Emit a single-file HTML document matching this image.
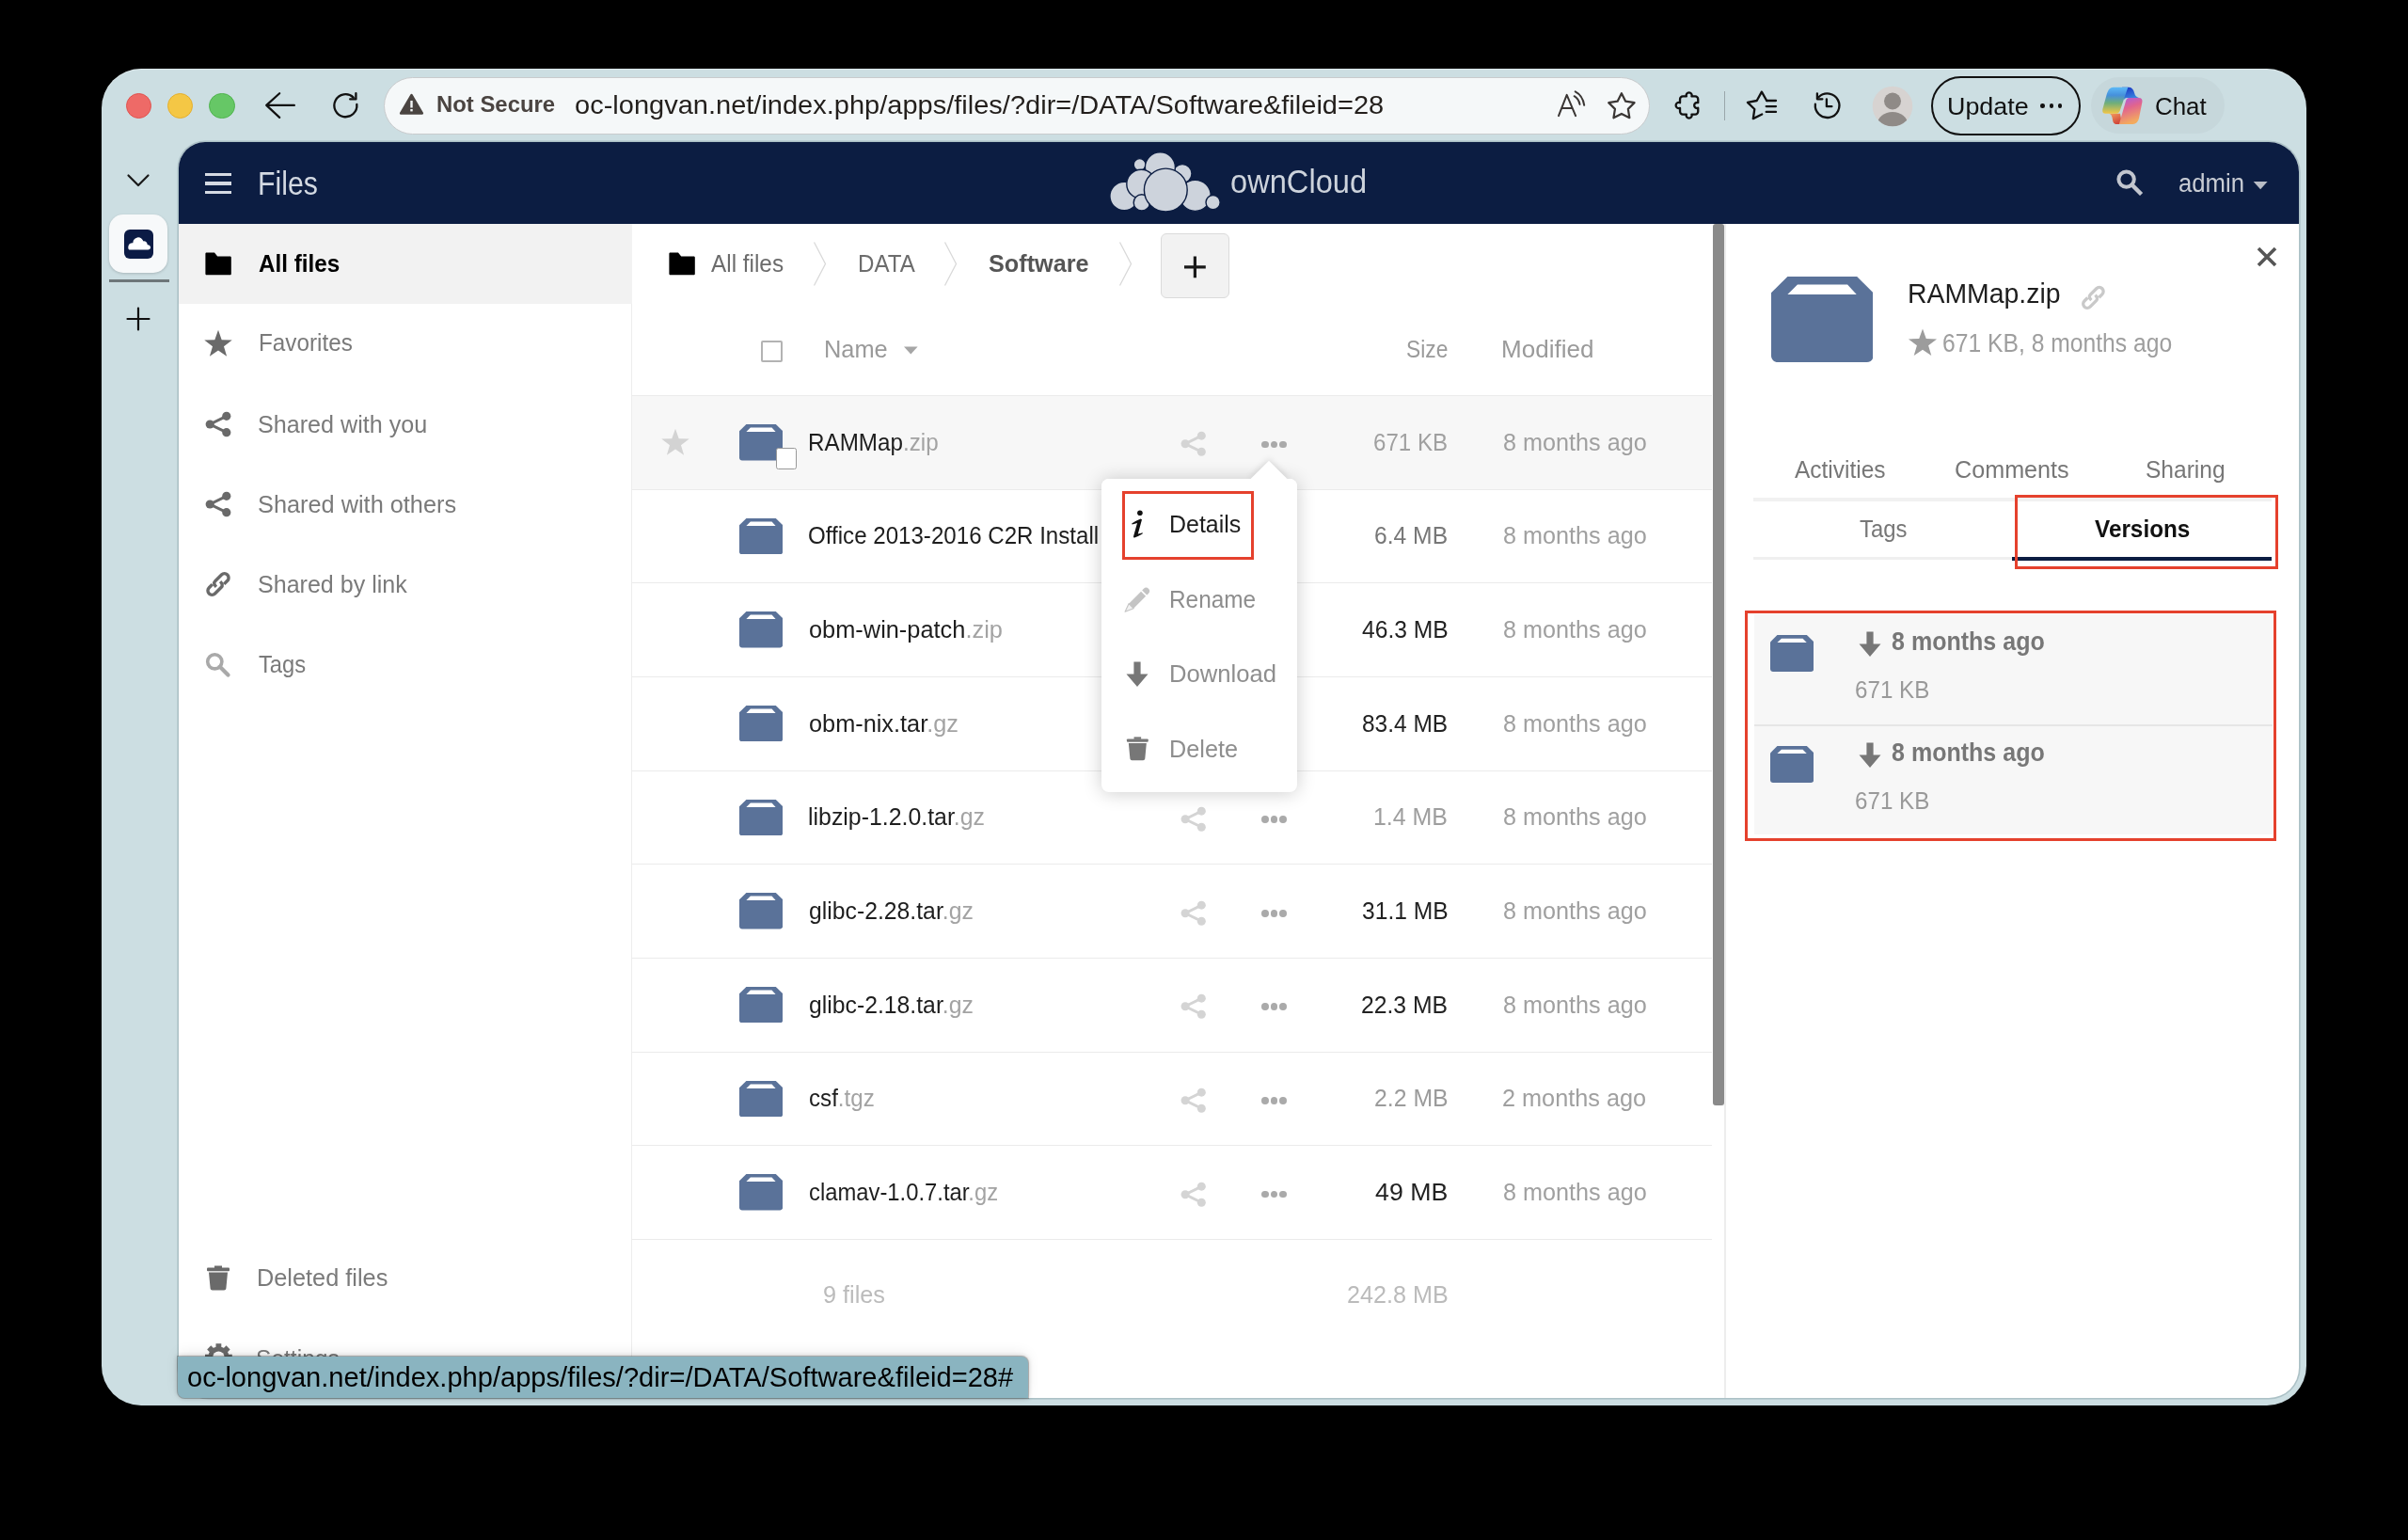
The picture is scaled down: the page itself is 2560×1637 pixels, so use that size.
<!DOCTYPE html>
<html><head><meta charset="utf-8"><style>
html,body{margin:0;padding:0;}
body{width:2560px;height:1637px;background:#000;position:relative;overflow:hidden;font-family:'Liberation Sans',sans-serif;}
body div, body svg{position:absolute;box-sizing:border-box;}
.t{white-space:pre;line-height:1;transform-origin:0 0;}
</style></head><body>
<div style="left:108.00px;top:73.00px;width:2344.00px;height:1420.50px;background:#CCDEE2;border-radius:42px;box-shadow:inset 0 1px 0 rgba(255,255,255,0.35);"></div>
<div style="left:133.50px;top:98.50px;width:27.40px;height:27.40px;background:#EE6A67;border:1.2px solid #E0524E;border-radius:50%;"></div>
<div style="left:177.70px;top:98.50px;width:27.40px;height:27.40px;background:#F4C745;border:1.2px solid #E5AE2B;border-radius:50%;"></div>
<div style="left:222.20px;top:98.50px;width:27.40px;height:27.40px;background:#66C766;border:1.2px solid #4FB34D;border-radius:50%;"></div>
<svg style="left:278.00px;top:94.00px;" width="40" height="36" viewBox="0 0 40 36"><path d="M5.2 17.9H34.9M5.2 17.9L19.2 5.2M5.2 17.9L19.2 30.9" stroke="#111" stroke-width="2.2" fill="none" stroke-linecap="round" stroke-linejoin="round"/></svg>
<svg style="left:350.00px;top:95.00px;" width="36" height="36" viewBox="0 0 36 36"><path d="M25.7 8.6A12 12 0 1 0 29.3 15.9" stroke="#111" stroke-width="2.3" fill="none" stroke-linecap="round"/><path d="M28.4 4.2V10.4H22.2" stroke="#111" stroke-width="2.3" fill="none" stroke-linecap="round" stroke-linejoin="round"/></svg>
<div style="left:408.00px;top:82.00px;width:1345.50px;height:60.80px;background:#F5F8F9;border:1.8px solid #C9CBCD;border-radius:31px;"></div>
<svg style="left:424.00px;top:99.00px;" width="27" height="24" viewBox="0 0 27 24"><path d="M13.5 2.2L24.8 21.5H2.2Z" fill="#4A4441" stroke="#4A4441" stroke-width="2.6" stroke-linejoin="round"/><rect x="12.3" y="8" width="2.4" height="7.5" fill="#F4F7F8"/><rect x="12.3" y="17" width="2.4" height="2.4" fill="#F4F7F8"/></svg>
<div class="t" style="left:464.31px;top:99.37px;font-size:24.13px;font-weight:700;font-family:'Liberation Sans';transform:scaleX(0.9899);"><span style="color:#4A4441">Not Secure</span></div>
<div class="t" style="left:611.39px;top:99.01px;font-size:27.03px;font-weight:400;font-family:'Liberation Sans';transform:scaleX(1.0740);"><span style="color:#231F1C">oc-longvan.net/index.php/apps/files/?dir=/DATA/Software&amp;fileid=28</span></div>
<svg style="left:1650.00px;top:94.00px;" width="40" height="36" viewBox="0 0 40 36"><path d="M7 29.1L15.7 6.9L25.1 29.1M10.3 20.9H21.6" stroke="#3A3634" stroke-width="2" fill="none" stroke-linecap="round" stroke-linejoin="round"/><path d="M23.6 8.2Q28.3 11 29.5 16.9" stroke="#3A3634" stroke-width="2" fill="none" stroke-linecap="round"/><path d="M24.7 3.4Q32.6 7.5 34.2 17.8" stroke="#3A3634" stroke-width="2" fill="none" stroke-linecap="round"/></svg>
<svg style="left:1704.00px;top:93.00px;" width="40" height="38" viewBox="0 0 40 38"><path d="M19.90 6.20L24.19 14.69L33.60 16.15L26.84 22.86L28.36 32.25L19.90 27.90L11.44 32.25L12.96 22.86L6.20 16.15L15.61 14.69Z" stroke="#3A3634" stroke-width="2.2" fill="none" stroke-linejoin="round"/></svg>
<svg style="left:1776.00px;top:93.00px;" width="38" height="38" viewBox="0 0 38 38"><path d="M13.05 9.4H16.85A3 3 0 1 1 22.45 9.4H26.25A3 3 0 0 1 29.25 12.4V16.2A3 3 0 1 0 29.25 21.8V25.55A3 3 0 0 1 26.25 28.55H22.45A3 3 0 1 1 16.85 28.55H13.05A3 3 0 0 1 10.05 25.55V21.8A3.1 3.1 0 1 1 10.05 16.2V12.4A3 3 0 0 1 13.05 9.4Z" stroke="#111" stroke-width="2.3" fill="none" stroke-linejoin="round"/></svg>
<div style="left:1832.60px;top:97.00px;width:1.40px;height:30.70px;background:#9AA6AA;"></div>
<svg style="left:1854.00px;top:93.00px;" width="40" height="38" viewBox="0 0 40 38"><path d="M24.2 14L18.9 4.6L13.7 14L3.9 15.9L11.3 23L9.8 33.1L19.2 28.5" stroke="#111" stroke-width="2.3" fill="none" stroke-linejoin="round" stroke-linecap="round"/><path d="M24.2 14H34M23.7 20.1H34M23.7 25.9H34" stroke="#111" stroke-width="2.3" stroke-linecap="round"/></svg>
<svg style="left:1924.00px;top:94.00px;" width="38" height="36" viewBox="0 0 38 36"><path d="M5.9 16.64A12.8 12.8 0 1 0 9.71 8.99" stroke="#111" stroke-width="2.3" fill="none" stroke-linecap="round"/><path d="M7.9 5.3V11.3H13.4" stroke="#111" stroke-width="2.3" fill="none" stroke-linecap="round" stroke-linejoin="round"/><path d="M17.9 11.3V19.2H23.4" stroke="#111" stroke-width="2.3" fill="none" stroke-linecap="round" stroke-linejoin="round"/></svg>
<svg style="left:1990.00px;top:91.00px;" width="44" height="44" viewBox="0 0 44 44"><defs><clipPath id="av"><circle cx="22" cy="22" r="21.3"/></clipPath></defs><circle cx="22" cy="22" r="21.3" fill="#D7D3D1"/><g clip-path="url(#av)"><circle cx="22" cy="16.5" r="9" fill="#8F8A87"/><ellipse cx="22" cy="41" rx="16" ry="13" fill="#8F8A87"/></g></svg>
<div style="left:2052.50px;top:80.60px;width:159.50px;height:63.20px;border:2.5px solid #111;border-radius:32px;"></div>
<div class="t" style="left:2070.12px;top:99.77px;font-size:26.02px;font-weight:500;font-family:'Liberation Sans';transform:scaleX(1.0331);"><span style="color:#111">Update</span></div>
<div style="left:2169.20px;top:110.40px;width:4.60px;height:4.60px;background:#111;border-radius:50%;"></div>
<div style="left:2178.50px;top:110.40px;width:4.60px;height:4.60px;background:#111;border-radius:50%;"></div>
<div style="left:2187.80px;top:110.40px;width:4.60px;height:4.60px;background:#111;border-radius:50%;"></div>
<div style="left:2222.50px;top:82.00px;width:142.90px;height:59.80px;background:#C6D7DB;border-radius:30px;"></div>
<svg style="left:2232.00px;top:90.00px;" width="48" height="44" viewBox="0 0 48 44"><defs>
<linearGradient id="cg1" x1="0" y1="0" x2="0" y2="1"><stop offset="0" stop-color="#5CB9F6"/><stop offset="0.3" stop-color="#4690DC"/><stop offset="0.6" stop-color="#6FAE7A"/><stop offset="1" stop-color="#F2C646"/></linearGradient>
<linearGradient id="cg2" x1="0" y1="0" x2="0.3" y2="1"><stop offset="0" stop-color="#A65BE6"/><stop offset="0.45" stop-color="#E1648E"/><stop offset="1" stop-color="#F3AA5E"/></linearGradient>
<linearGradient id="cg3" x1="0" y1="0" x2="0.4" y2="1"><stop offset="0" stop-color="#1730C0"/><stop offset="1" stop-color="#3A86E0"/></linearGradient>
<linearGradient id="cg4" x1="0" y1="0" x2="0.6" y2="1"><stop offset="0" stop-color="#F4A060"/><stop offset="1" stop-color="#D0453A"/></linearGradient>
</defs>
<path d="M24 2.8H31Q35.6 2.8 37 8.6Q38.2 13.6 42 13.9H29Q27 13.9 26.4 16Z" fill="url(#cg3)"/>
<path d="M11.5 30.7H22L24 41.9H17.2Q14.8 41.9 14 37.5Q13.2 31 10 30.7Z" fill="url(#cg4)"/>
<path d="M14.5 2.8H30.3L21.8 27.6Q20.8 30.7 17.8 30.7H6.6Q2.6 30.7 3.3 26.2L8 9.3Q10 2.8 14.5 2.8Z" fill="url(#cg1)"/>
<path d="M31.5 13.9H41.8Q46.2 13.9 45.4 18.6L42 35.8Q40.6 41.9 35.4 41.9H20.9L28.2 16.8Q29 13.9 31.5 13.9Z" fill="url(#cg2)"/></svg>
<div class="t" style="left:2291.09px;top:99.77px;font-size:26.02px;font-weight:500;font-family:'Liberation Sans';transform:scaleX(0.9958);"><span style="color:#111">Chat</span></div>
<svg style="left:130.00px;top:180.00px;" width="34" height="24" viewBox="0 0 34 24"><path d="M6.5 6.5L17 17L27.5 6.5" stroke="#1A1A1A" stroke-width="2.2" fill="none" stroke-linecap="round" stroke-linejoin="round"/></svg>
<div style="left:116.00px;top:227.70px;width:62.00px;height:62.30px;background:#F7F9FA;border-radius:15px;box-shadow:0 1px 3px rgba(0,0,0,0.18);"></div>
<div style="left:131.50px;top:243.50px;width:31.00px;height:31.00px;background:#0B1B45;border-radius:6px;"></div>
<svg style="left:131.50px;top:243.50px;" width="31" height="31" viewBox="0 0 31 31"><path d="M5.5 21.5H25.2C27.2 21.5 28.2 20 28 18.6C27.7 17 26.4 16 24.8 16.2C24.5 13.6 22.5 12 20.3 12.4C19.3 9.6 16.8 8 14.2 8.4C11.3 8.8 9.3 11.3 9.4 14.3C7.2 14 5 15.2 4.5 17.5C4 19.6 4.5 21.5 5.5 21.5Z" fill="#fff"/></svg>
<div style="left:116.00px;top:297.40px;width:64.00px;height:2.40px;background:#6E7679;"></div>
<svg style="left:130.00px;top:322.00px;" width="34" height="34" viewBox="0 0 34 34"><path d="M17 5.5V28.5M5.5 17H28.5" stroke="#111" stroke-width="2.2" stroke-linecap="round"/></svg>
<div style="left:189.50px;top:151.00px;width:2254.50px;height:1335.30px;background:#fff;border-radius:28px 32px 32px 32px;overflow:hidden;box-shadow:0 0 0 1.6px rgba(60,90,100,0.22);"></div>
<div style="left:189.50px;top:151.00px;width:2254.50px;height:86.80px;background:#0C1D42;border-radius:28px 32px 0 0;"></div>
<div style="left:218.40px;top:184.20px;width:27.90px;height:3.20px;background:#D5DAE3;"></div>
<div style="left:218.40px;top:193.40px;width:27.90px;height:3.20px;background:#D5DAE3;"></div>
<div style="left:218.40px;top:202.60px;width:27.90px;height:3.20px;background:#D5DAE3;"></div>
<div class="t" style="left:274.04px;top:178.13px;font-size:34.45px;font-weight:400;font-family:'Liberation Sans';transform:scaleX(0.8787);"><span style="color:#D3D9E2">Files</span></div>
<svg style="left:1180.00px;top:161.00px;" width="120" height="66" viewBox="0 0 120 66"><circle cx="15.2" cy="47.5" r="15.3" fill="#CDD3DC" stroke="#0C1D42" stroke-width="1.4"/><circle cx="31.6" cy="14" r="6.4" fill="#CDD3DC" stroke="#0C1D42" stroke-width="1.4"/><circle cx="77" cy="23.6" r="10" fill="#CDD3DC" stroke="#0C1D42" stroke-width="1.4"/><circle cx="53.4" cy="16.8" r="16" fill="#CDD3DC" stroke="#0C1D42" stroke-width="1.4"/><circle cx="33.2" cy="34.7" r="15.4" fill="#CDD3DC" stroke="#0C1D42" stroke-width="1.4"/><circle cx="90.6" cy="46.8" r="16.6" fill="#CDD3DC" stroke="#0C1D42" stroke-width="1.4"/><circle cx="109.6" cy="54.1" r="7.6" fill="#CDD3DC" stroke="#0C1D42" stroke-width="1.4"/><circle cx="33.8" cy="54.4" r="8.6" fill="#CDD3DC" stroke="#0C1D42" stroke-width="1.4"/><circle cx="59.3" cy="41" r="22.9" fill="#CDD3DC" stroke="#0C1D42" stroke-width="1.4"/></svg>
<div class="t" style="left:1307.78px;top:174.85px;font-size:35.00px;font-weight:300;font-family:'Liberation Sans';transform:scaleX(0.9319);"><span style="color:#CDD3DC">ownCloud</span></div>
<svg style="left:2248.00px;top:178.00px;" width="32" height="33" viewBox="0 0 32 33"><circle cx="12.6" cy="12.6" r="8.2" stroke="#C2C6CF" stroke-width="4" fill="none"/><path d="M18.6 18.6L27 27" stroke="#C2C6CF" stroke-width="4.4" stroke-linecap="square"/></svg>
<div class="t" style="left:2315.80px;top:181.62px;font-size:27.00px;font-weight:400;font-family:'Liberation Sans';transform:scaleX(0.9525);"><span style="color:#C8CCD4">admin</span></div>
<svg style="left:2394.00px;top:191.00px;" width="18" height="12" viewBox="0 0 18 12"><path d="M1.7 2H16.6L9.15 10.3Z" fill="#B9BDC6"/></svg>
<div style="left:189.50px;top:237.80px;width:482.50px;height:1248.50px;background:#fff;border-right:1px solid #EDEDED;border-radius:0 0 0 32px;"></div>
<div style="left:189.50px;top:237.80px;width:482.00px;height:84.90px;background:#F2F2F2;"></div>
<svg style="left:216.00px;top:266.00px;" width="32" height="28" viewBox="0 0 32 28"><path d="M2.4 3.8C2.4 3 3 2.6 3.7 2.6H12L15.2 6.4H28.6C29.3 6.4 29.8 7 29.8 7.6V25C29.8 25.7 29.3 26.3 28.6 26.3H3.7C3 26.3 2.4 25.7 2.4 25Z" fill="#000"/></svg>
<div class="t" style="left:274.62px;top:267.94px;font-size:25.58px;font-weight:700;font-family:'Liberation Sans';transform:scaleX(0.9492);"><span style="color:#000">All files</span></div>
<svg style="left:215.00px;top:348.00px;" width="34" height="34" viewBox="0 0 34 34"><path d="M17.00 2.80L20.70 13.20L31.74 13.51L22.99 20.25L26.11 30.84L17.00 24.60L7.89 30.84L11.01 20.25L2.26 13.51L13.30 13.20Z" fill="#6A6A6A"/></svg>
<div class="t" style="left:275.00px;top:352.09px;font-size:25.87px;font-weight:400;font-family:'Liberation Sans';transform:scaleX(0.9385);"><span style="color:#7A7A7A">Favorites</span></div>
<svg style="left:217px;top:435.6px" width="30.0" height="30.0" viewBox="0 0 30 30"><path d="M23.8 6.3L6.2 15L23.8 23.7" stroke="#6A6A6A" stroke-width="3" fill="none"/><circle cx="23.8" cy="6.3" r="4.6" fill="#6A6A6A"/><circle cx="6.2" cy="15" r="4.6" fill="#6A6A6A"/><circle cx="23.8" cy="23.7" r="4.6" fill="#6A6A6A"/></svg>
<div class="t" style="left:274.21px;top:438.25px;font-size:26.16px;font-weight:400;font-family:'Liberation Sans';transform:scaleX(0.9605);"><span style="color:#7A7A7A">Shared with you</span></div>
<svg style="left:217px;top:520.7px" width="30.0" height="30.0" viewBox="0 0 30 30"><path d="M23.8 6.3L6.2 15L23.8 23.7" stroke="#6A6A6A" stroke-width="3" fill="none"/><circle cx="23.8" cy="6.3" r="4.6" fill="#6A6A6A"/><circle cx="6.2" cy="15" r="4.6" fill="#6A6A6A"/><circle cx="23.8" cy="23.7" r="4.6" fill="#6A6A6A"/></svg>
<div class="t" style="left:274.21px;top:523.35px;font-size:26.16px;font-weight:400;font-family:'Liberation Sans';transform:scaleX(0.9681);"><span style="color:#7A7A7A">Shared with others</span></div>
<svg style="left:212.20px;top:600.90px" width="40.00" height="40.00" viewBox="0 0 40 40"><path d="M17.88 22.83Q14.27 19.22 16.75 16.75L23.46 10.03A4.45 4.45 0 0 1 29.76 16.32L26.22 19.86M22.12 17.17Q25.73 20.78 23.25 23.25L16.54 29.97A4.45 4.45 0 0 1 10.24 23.68L13.78 20.14" stroke="#6A6A6A" stroke-width="3.4" fill="none" stroke-linecap="butt"/></svg>
<div class="t" style="left:274.22px;top:608.35px;font-size:26.16px;font-weight:400;font-family:'Liberation Sans';transform:scaleX(0.9578);"><span style="color:#7A7A7A">Shared by link</span></div>
<svg style="left:216.00px;top:691.00px;" width="32" height="32" viewBox="0 0 32 32"><circle cx="12.3" cy="12.3" r="7.6" stroke="#A9A9A9" stroke-width="3.6" fill="none"/><path d="M17.8 17.8L26.5 26.5" stroke="#A9A9A9" stroke-width="4.2" stroke-linecap="round"/></svg>
<div class="t" style="left:274.63px;top:693.35px;font-size:26.16px;font-weight:400;font-family:'Liberation Sans';transform:scaleX(0.9068);"><span style="color:#7A7A7A">Tags</span></div>
<svg style="left:218.8px;top:1343px" width="26.0" height="30.0" viewBox="0 0 26 30"><path d="M9 2.5H17V5H9Z" fill="#6A6A6A"/><rect x="1" y="4.6" width="24" height="3.6" rx="1" fill="#6A6A6A"/><path d="M3 9.5H23L21.4 26.6C21.3 27.8 20.3 28.6 19.2 28.6H6.8C5.7 28.6 4.7 27.8 4.6 26.6Z" fill="#6A6A6A"/></svg>
<div class="t" style="left:273.02px;top:1344.85px;font-size:26.16px;font-weight:400;font-family:'Liberation Sans';transform:scaleX(0.9680);"><span style="color:#7A7A7A">Deleted files</span></div>
<svg style="left:216.00px;top:1426.00px;" width="32" height="32" viewBox="0 0 32 32"><g fill="#6A6A6A"><circle cx="16.4" cy="16.6" r="11"/><rect x="13.5" y="2.2" width="5.8" height="7" transform="rotate(0 16.4 16.6)"/><rect x="13.5" y="2.2" width="5.8" height="7" transform="rotate(45 16.4 16.6)"/><rect x="13.5" y="2.2" width="5.8" height="7" transform="rotate(90 16.4 16.6)"/><rect x="13.5" y="2.2" width="5.8" height="7" transform="rotate(135 16.4 16.6)"/><rect x="13.5" y="2.2" width="5.8" height="7" transform="rotate(180 16.4 16.6)"/><rect x="13.5" y="2.2" width="5.8" height="7" transform="rotate(225 16.4 16.6)"/><rect x="13.5" y="2.2" width="5.8" height="7" transform="rotate(270 16.4 16.6)"/><rect x="13.5" y="2.2" width="5.8" height="7" transform="rotate(315 16.4 16.6)"/></g><circle cx="16.4" cy="16.6" r="6.2" fill="#fff"/></svg>
<div class="t" style="left:272.03px;top:1430.55px;font-size:26.16px;font-weight:400;font-family:'Liberation Sans';transform:scaleX(0.9387);"><span style="color:#7A7A7A">Settings</span></div>
<svg style="left:709.00px;top:266.00px;" width="32" height="28" viewBox="0 0 32 28"><path d="M2.4 3.8C2.4 3 3 2.6 3.7 2.6H12L15.2 6.4H28.6C29.3 6.4 29.8 7 29.8 7.6V25C29.8 25.7 29.3 26.3 28.6 26.3H3.7C3 26.3 2.4 25.7 2.4 25Z" fill="#000"/></svg>
<div class="t" style="left:756.00px;top:266.85px;font-size:26.16px;font-weight:400;font-family:'Liberation Sans';transform:scaleX(0.9299);"><span style="color:#6C6C6C">All files</span></div>
<svg style="left:863.00px;top:255.00px;" width="18" height="52" viewBox="0 0 18 52"><path d="M2.5 2.5L14.5 25.5L2.5 48.5" stroke="#D9D9D9" stroke-width="1.3" fill="none"/></svg>
<svg style="left:1002.40px;top:255.00px;" width="18" height="52" viewBox="0 0 18 52"><path d="M2.5 2.5L14.5 25.5L2.5 48.5" stroke="#D9D9D9" stroke-width="1.3" fill="none"/></svg>
<svg style="left:1188.00px;top:255.00px;" width="18" height="52" viewBox="0 0 18 52"><path d="M2.5 2.5L14.5 25.5L2.5 48.5" stroke="#D9D9D9" stroke-width="1.3" fill="none"/></svg>
<div class="t" style="left:911.52px;top:266.85px;font-size:26.16px;font-weight:400;font-family:'Liberation Sans';transform:scaleX(0.9222);"><span style="color:#6C6C6C">DATA</span></div>
<div class="t" style="left:1051.41px;top:266.85px;font-size:26.16px;font-weight:700;font-family:'Liberation Sans';transform:scaleX(0.9650);"><span style="color:#555">Software</span></div>
<div style="left:1234.00px;top:248.40px;width:72.50px;height:68.20px;background:#F2F2F2;border:1px solid #DBDBDB;border-radius:6px;"></div>
<svg style="left:1256.00px;top:270.00px;" width="28" height="28" viewBox="0 0 28 28"><path d="M14.4 2.4V25.2M3 13.8H25.8" stroke="#1A1A1A" stroke-width="3.2"/></svg>
<div style="left:809.00px;top:362.40px;width:23.00px;height:22.20px;border:2px solid #B3B3B3;border-radius:2px;background:#fff;"></div>
<div class="t" style="left:875.52px;top:359.19px;font-size:25.29px;font-weight:400;font-family:'Liberation Sans';transform:scaleX(1.0037);"><span style="color:#9A9A9A">Name</span></div>
<svg style="left:959.00px;top:366.00px;" width="18" height="12" viewBox="0 0 18 12"><path d="M2 2.4H16.6L9.3 10.6Z" fill="#A6A6A6"/></svg>
<div class="t" style="left:1494.99px;top:358.54px;font-size:25.58px;font-weight:400;font-family:'Liberation Sans';transform:scaleX(0.8909);"><span style="color:#9A9A9A">Size</span></div>
<div class="t" style="left:1596.37px;top:358.54px;font-size:25.58px;font-weight:400;font-family:'Liberation Sans';transform:scaleX(1.0176);"><span style="color:#9A9A9A">Modified</span></div>
<div style="left:672.00px;top:419.80px;width:1148.00px;height:1.20px;background:#EBEBEB;"></div>
<div style="left:672.00px;top:421.10px;width:1148.00px;height:99.15px;background:#F7F7F7;"></div>
<div style="left:672.00px;top:519.65px;width:1148.00px;height:1.20px;background:#EBEBEB;"></div>
<svg style="left:785.70px;top:451.00px" width="46.20" height="38.50" viewBox="0 0 46.2 38.5" preserveAspectRatio="none"><path d="M7.4 0H38.8L46.2 7.3V35.5C46.2 37.2 45 38.5 43.2 38.5H3C1.3 38.5 0 37.2 0 35.5V7.3Z" fill="#5A7299"/><path d="M11.9 3.6H34.5L38.6 8H7.4Z" fill="#fff"/></svg>
<div class="t" style="left:858.61px;top:456.65px;font-size:26.16px;font-weight:400;font-family:'Liberation Sans';transform:scaleX(0.9261);"><span style="color:#1E1E1E">RAMMap</span><span style="color:#A3A3A3">.zip</span></div>
<svg style="left:1254.3px;top:457.40000000000003px" width="29.4" height="29.4" viewBox="0 0 30 30"><path d="M23.8 6.3L6.2 15L23.8 23.7" stroke="#D4D4D4" stroke-width="3" fill="none"/><circle cx="23.8" cy="6.3" r="4.6" fill="#D4D4D4"/><circle cx="6.2" cy="15" r="4.6" fill="#D4D4D4"/><circle cx="23.8" cy="23.7" r="4.6" fill="#D4D4D4"/></svg>
<div style="left:1340.80px;top:468.50px;width:7.80px;height:7.80px;background:#AAAAAA;border-radius:50%;"></div>
<div style="left:1350.50px;top:468.50px;width:7.80px;height:7.80px;background:#AAAAAA;border-radius:50%;"></div>
<div style="left:1360.20px;top:468.50px;width:7.80px;height:7.80px;background:#AAAAAA;border-radius:50%;"></div>
<div class="t" style="left:1460.37px;top:456.65px;font-size:26.16px;font-weight:400;font-family:'Liberation Sans';transform:scaleX(0.9210);"><span style="color:#A0A0A0">671 KB</span></div>
<div class="t" style="left:1597.61px;top:456.65px;font-size:26.16px;font-weight:400;font-family:'Liberation Sans';transform:scaleX(0.9632);"><span style="color:#A0A0A0">8 months ago</span></div>
<div style="left:672.00px;top:619.30px;width:1148.00px;height:1.20px;background:#EBEBEB;"></div>
<svg style="left:785.70px;top:550.65px" width="46.20" height="38.50" viewBox="0 0 46.2 38.5" preserveAspectRatio="none"><path d="M7.4 0H38.8L46.2 7.3V35.5C46.2 37.2 45 38.5 43.2 38.5H3C1.3 38.5 0 37.2 0 35.5V7.3Z" fill="#5A7299"/><path d="M11.9 3.6H34.5L38.6 8H7.4Z" fill="#fff"/></svg>
<div class="t" style="left:859.37px;top:556.30px;font-size:26.16px;font-weight:400;font-family:'Liberation Sans';transform:scaleX(0.9218);"><span style="color:#1E1E1E">Office 2013-2016 C2R Install</span></div>
<div class="t" style="left:1461.34px;top:556.30px;font-size:26.16px;font-weight:400;font-family:'Liberation Sans';transform:scaleX(0.9422);"><span style="color:#777777">6.4 MB</span></div>
<div class="t" style="left:1597.61px;top:556.30px;font-size:26.16px;font-weight:400;font-family:'Liberation Sans';transform:scaleX(0.9632);"><span style="color:#A0A0A0">8 months ago</span></div>
<div style="left:672.00px;top:718.95px;width:1148.00px;height:1.20px;background:#EBEBEB;"></div>
<svg style="left:785.70px;top:650.30px" width="46.20" height="38.50" viewBox="0 0 46.2 38.5" preserveAspectRatio="none"><path d="M7.4 0H38.8L46.2 7.3V35.5C46.2 37.2 45 38.5 43.2 38.5H3C1.3 38.5 0 37.2 0 35.5V7.3Z" fill="#5A7299"/><path d="M11.9 3.6H34.5L38.6 8H7.4Z" fill="#fff"/></svg>
<div class="t" style="left:859.71px;top:655.95px;font-size:26.16px;font-weight:400;font-family:'Liberation Sans';transform:scaleX(0.9700);"><span style="color:#1E1E1E">obm-win-patch</span><span style="color:#A3A3A3">.zip</span></div>
<div class="t" style="left:1447.61px;top:655.95px;font-size:26.16px;font-weight:400;font-family:'Liberation Sans';transform:scaleX(0.9424);"><span style="color:#222">46.3 MB</span></div>
<div class="t" style="left:1597.61px;top:655.95px;font-size:26.16px;font-weight:400;font-family:'Liberation Sans';transform:scaleX(0.9632);"><span style="color:#A0A0A0">8 months ago</span></div>
<div style="left:672.00px;top:818.60px;width:1148.00px;height:1.20px;background:#EBEBEB;"></div>
<svg style="left:785.70px;top:749.95px" width="46.20" height="38.50" viewBox="0 0 46.2 38.5" preserveAspectRatio="none"><path d="M7.4 0H38.8L46.2 7.3V35.5C46.2 37.2 45 38.5 43.2 38.5H3C1.3 38.5 0 37.2 0 35.5V7.3Z" fill="#5A7299"/><path d="M11.9 3.6H34.5L38.6 8H7.4Z" fill="#fff"/></svg>
<div class="t" style="left:859.71px;top:755.60px;font-size:26.16px;font-weight:400;font-family:'Liberation Sans';transform:scaleX(0.9676);"><span style="color:#1E1E1E">obm-nix.tar</span><span style="color:#A3A3A3">.gz</span></div>
<div class="t" style="left:1448.23px;top:755.60px;font-size:26.16px;font-weight:400;font-family:'Liberation Sans';transform:scaleX(0.9360);"><span style="color:#222">83.4 MB</span></div>
<div class="t" style="left:1597.61px;top:755.60px;font-size:26.16px;font-weight:400;font-family:'Liberation Sans';transform:scaleX(0.9632);"><span style="color:#A0A0A0">8 months ago</span></div>
<div style="left:672.00px;top:918.25px;width:1148.00px;height:1.20px;background:#EBEBEB;"></div>
<svg style="left:785.70px;top:849.60px" width="46.20" height="38.50" viewBox="0 0 46.2 38.5" preserveAspectRatio="none"><path d="M7.4 0H38.8L46.2 7.3V35.5C46.2 37.2 45 38.5 43.2 38.5H3C1.3 38.5 0 37.2 0 35.5V7.3Z" fill="#5A7299"/><path d="M11.9 3.6H34.5L38.6 8H7.4Z" fill="#fff"/></svg>
<div class="t" style="left:858.95px;top:855.25px;font-size:26.16px;font-weight:400;font-family:'Liberation Sans';transform:scaleX(0.9507);"><span style="color:#1E1E1E">libzip-1.2.0.tar</span><span style="color:#A3A3A3">.gz</span></div>
<svg style="left:1254.3px;top:856.0px" width="29.4" height="29.4" viewBox="0 0 30 30"><path d="M23.8 6.3L6.2 15L23.8 23.7" stroke="#D4D4D4" stroke-width="3" fill="none"/><circle cx="23.8" cy="6.3" r="4.6" fill="#D4D4D4"/><circle cx="6.2" cy="15" r="4.6" fill="#D4D4D4"/><circle cx="23.8" cy="23.7" r="4.6" fill="#D4D4D4"/></svg>
<div style="left:1340.80px;top:867.10px;width:7.80px;height:7.80px;background:#AAAAAA;border-radius:50%;"></div>
<div style="left:1350.50px;top:867.10px;width:7.80px;height:7.80px;background:#AAAAAA;border-radius:50%;"></div>
<div style="left:1360.20px;top:867.10px;width:7.80px;height:7.80px;background:#AAAAAA;border-radius:50%;"></div>
<div class="t" style="left:1460.44px;top:855.25px;font-size:26.16px;font-weight:400;font-family:'Liberation Sans';transform:scaleX(0.9532);"><span style="color:#9E9E9E">1.4 MB</span></div>
<div class="t" style="left:1597.61px;top:855.25px;font-size:26.16px;font-weight:400;font-family:'Liberation Sans';transform:scaleX(0.9632);"><span style="color:#A0A0A0">8 months ago</span></div>
<div style="left:672.00px;top:1017.90px;width:1148.00px;height:1.20px;background:#EBEBEB;"></div>
<svg style="left:785.70px;top:949.25px" width="46.20" height="38.50" viewBox="0 0 46.2 38.5" preserveAspectRatio="none"><path d="M7.4 0H38.8L46.2 7.3V35.5C46.2 37.2 45 38.5 43.2 38.5H3C1.3 38.5 0 37.2 0 35.5V7.3Z" fill="#5A7299"/><path d="M11.9 3.6H34.5L38.6 8H7.4Z" fill="#fff"/></svg>
<div class="t" style="left:859.73px;top:954.90px;font-size:26.16px;font-weight:400;font-family:'Liberation Sans';transform:scaleX(0.9466);"><span style="color:#1E1E1E">glibc-2.28.tar</span><span style="color:#A3A3A3">.gz</span></div>
<svg style="left:1254.3px;top:955.65px" width="29.4" height="29.4" viewBox="0 0 30 30"><path d="M23.8 6.3L6.2 15L23.8 23.7" stroke="#D4D4D4" stroke-width="3" fill="none"/><circle cx="23.8" cy="6.3" r="4.6" fill="#D4D4D4"/><circle cx="6.2" cy="15" r="4.6" fill="#D4D4D4"/><circle cx="23.8" cy="23.7" r="4.6" fill="#D4D4D4"/></svg>
<div style="left:1340.80px;top:966.75px;width:7.80px;height:7.80px;background:#AAAAAA;border-radius:50%;"></div>
<div style="left:1350.50px;top:966.75px;width:7.80px;height:7.80px;background:#AAAAAA;border-radius:50%;"></div>
<div style="left:1360.20px;top:966.75px;width:7.80px;height:7.80px;background:#AAAAAA;border-radius:50%;"></div>
<div class="t" style="left:1447.73px;top:954.90px;font-size:26.16px;font-weight:400;font-family:'Liberation Sans';transform:scaleX(0.9412);"><span style="color:#222">31.1 MB</span></div>
<div class="t" style="left:1597.61px;top:954.90px;font-size:26.16px;font-weight:400;font-family:'Liberation Sans';transform:scaleX(0.9632);"><span style="color:#A0A0A0">8 months ago</span></div>
<div style="left:672.00px;top:1117.55px;width:1148.00px;height:1.20px;background:#EBEBEB;"></div>
<svg style="left:785.70px;top:1048.90px" width="46.20" height="38.50" viewBox="0 0 46.2 38.5" preserveAspectRatio="none"><path d="M7.4 0H38.8L46.2 7.3V35.5C46.2 37.2 45 38.5 43.2 38.5H3C1.3 38.5 0 37.2 0 35.5V7.3Z" fill="#5A7299"/><path d="M11.9 3.6H34.5L38.6 8H7.4Z" fill="#fff"/></svg>
<div class="t" style="left:859.73px;top:1054.55px;font-size:26.16px;font-weight:400;font-family:'Liberation Sans';transform:scaleX(0.9466);"><span style="color:#1E1E1E">glibc-2.18.tar</span><span style="color:#A3A3A3">.gz</span></div>
<svg style="left:1254.3px;top:1055.3000000000002px" width="29.4" height="29.4" viewBox="0 0 30 30"><path d="M23.8 6.3L6.2 15L23.8 23.7" stroke="#D4D4D4" stroke-width="3" fill="none"/><circle cx="23.8" cy="6.3" r="4.6" fill="#D4D4D4"/><circle cx="6.2" cy="15" r="4.6" fill="#D4D4D4"/><circle cx="23.8" cy="23.7" r="4.6" fill="#D4D4D4"/></svg>
<div style="left:1340.80px;top:1066.40px;width:7.80px;height:7.80px;background:#AAAAAA;border-radius:50%;"></div>
<div style="left:1350.50px;top:1066.40px;width:7.80px;height:7.80px;background:#AAAAAA;border-radius:50%;"></div>
<div style="left:1360.20px;top:1066.40px;width:7.80px;height:7.80px;background:#AAAAAA;border-radius:50%;"></div>
<div class="t" style="left:1447.34px;top:1054.55px;font-size:26.16px;font-weight:400;font-family:'Liberation Sans';transform:scaleX(0.9452);"><span style="color:#222">22.3 MB</span></div>
<div class="t" style="left:1597.61px;top:1054.55px;font-size:26.16px;font-weight:400;font-family:'Liberation Sans';transform:scaleX(0.9632);"><span style="color:#A0A0A0">8 months ago</span></div>
<div style="left:672.00px;top:1217.20px;width:1148.00px;height:1.20px;background:#EBEBEB;"></div>
<svg style="left:785.70px;top:1148.55px" width="46.20" height="38.50" viewBox="0 0 46.2 38.5" preserveAspectRatio="none"><path d="M7.4 0H38.8L46.2 7.3V35.5C46.2 37.2 45 38.5 43.2 38.5H3C1.3 38.5 0 37.2 0 35.5V7.3Z" fill="#5A7299"/><path d="M11.9 3.6H34.5L38.6 8H7.4Z" fill="#fff"/></svg>
<div class="t" style="left:859.75px;top:1154.20px;font-size:26.16px;font-weight:400;font-family:'Liberation Sans';transform:scaleX(0.9231);"><span style="color:#1E1E1E">csf</span><span style="color:#A3A3A3">.tgz</span></div>
<svg style="left:1254.3px;top:1154.95px" width="29.4" height="29.4" viewBox="0 0 30 30"><path d="M23.8 6.3L6.2 15L23.8 23.7" stroke="#D4D4D4" stroke-width="3" fill="none"/><circle cx="23.8" cy="6.3" r="4.6" fill="#D4D4D4"/><circle cx="6.2" cy="15" r="4.6" fill="#D4D4D4"/><circle cx="23.8" cy="23.7" r="4.6" fill="#D4D4D4"/></svg>
<div style="left:1340.80px;top:1166.05px;width:7.80px;height:7.80px;background:#AAAAAA;border-radius:50%;"></div>
<div style="left:1350.50px;top:1166.05px;width:7.80px;height:7.80px;background:#AAAAAA;border-radius:50%;"></div>
<div style="left:1360.20px;top:1166.05px;width:7.80px;height:7.80px;background:#AAAAAA;border-radius:50%;"></div>
<div class="t" style="left:1460.84px;top:1154.20px;font-size:26.16px;font-weight:400;font-family:'Liberation Sans';transform:scaleX(0.9484);"><span style="color:#9B9B9B">2.2 MB</span></div>
<div class="t" style="left:1597.22px;top:1154.20px;font-size:26.16px;font-weight:400;font-family:'Liberation Sans';transform:scaleX(0.9658);"><span style="color:#A0A0A0">2 months ago</span></div>
<div style="left:672.00px;top:1316.85px;width:1148.00px;height:1.20px;background:#EBEBEB;"></div>
<svg style="left:785.70px;top:1248.20px" width="46.20" height="38.50" viewBox="0 0 46.2 38.5" preserveAspectRatio="none"><path d="M7.4 0H38.8L46.2 7.3V35.5C46.2 37.2 45 38.5 43.2 38.5H3C1.3 38.5 0 37.2 0 35.5V7.3Z" fill="#5A7299"/><path d="M11.9 3.6H34.5L38.6 8H7.4Z" fill="#fff"/></svg>
<div class="t" style="left:859.76px;top:1253.85px;font-size:26.16px;font-weight:400;font-family:'Liberation Sans';transform:scaleX(0.9101);"><span style="color:#1E1E1E">clamav-1.0.7.tar</span><span style="color:#A3A3A3">.gz</span></div>
<svg style="left:1254.3px;top:1254.6000000000001px" width="29.4" height="29.4" viewBox="0 0 30 30"><path d="M23.8 6.3L6.2 15L23.8 23.7" stroke="#D4D4D4" stroke-width="3" fill="none"/><circle cx="23.8" cy="6.3" r="4.6" fill="#D4D4D4"/><circle cx="6.2" cy="15" r="4.6" fill="#D4D4D4"/><circle cx="23.8" cy="23.7" r="4.6" fill="#D4D4D4"/></svg>
<div style="left:1340.80px;top:1265.70px;width:7.80px;height:7.80px;background:#AAAAAA;border-radius:50%;"></div>
<div style="left:1350.50px;top:1265.70px;width:7.80px;height:7.80px;background:#AAAAAA;border-radius:50%;"></div>
<div style="left:1360.20px;top:1265.70px;width:7.80px;height:7.80px;background:#AAAAAA;border-radius:50%;"></div>
<div class="t" style="left:1462.18px;top:1253.85px;font-size:26.16px;font-weight:400;font-family:'Liberation Sans';transform:scaleX(1.0229);"><span style="color:#222">49 MB</span></div>
<div class="t" style="left:1597.61px;top:1253.85px;font-size:26.16px;font-weight:400;font-family:'Liberation Sans';transform:scaleX(0.9632);"><span style="color:#A0A0A0">8 months ago</span></div>
<svg style="left:701.00px;top:453.00px;" width="34" height="34" viewBox="0 0 34 34"><path d="M17.00 2.80L20.70 13.20L31.74 13.51L22.99 20.25L26.11 30.84L17.00 24.60L7.89 30.84L11.01 20.25L2.26 13.51L13.30 13.20Z" fill="#D3D3D3"/></svg>
<div style="left:824.50px;top:476.20px;width:22.30px;height:22.60px;background:#fff;border:1.6px solid #999;border-radius:2.5px;"></div>
<div class="t" style="left:875.42px;top:1362.80px;font-size:26.45px;font-weight:400;font-family:'Liberation Sans';transform:scaleX(0.9547);"><span style="color:#BBBBBB">9 files</span></div>
<div class="t" style="left:1432.12px;top:1362.80px;font-size:26.45px;font-weight:400;font-family:'Liberation Sans';transform:scaleX(0.9515);"><span style="color:#BBBBBB">242.8 MB</span></div>
<div style="left:1821.20px;top:238.00px;width:11.80px;height:937.40px;background:#8A8A8A;border-radius:3px;box-shadow:1px 0 2px rgba(0,0,0,0.12);"></div>
<div style="left:1171.00px;top:509.00px;width:208.40px;height:333.30px;background:#fff;border-radius:8px;box-shadow:0 1px 20px rgba(0,0,0,0.2);"></div>
<svg style="left:1326.00px;top:488.00px;filter:drop-shadow(0 -2px 3px rgba(0,0,0,0.12));" width="46" height="24" viewBox="0 0 46 24"><path d="M2.6 22H43.4L23 1.8Z" fill="#fff"/></svg>
<div style="left:1171.00px;top:509.00px;width:208.40px;height:11.00px;background:#fff;border-radius:8px 8px 0 0;"></div>
<svg style="left:1190.00px;top:535.00px;" width="40" height="45" viewBox="0 0 40 45"><circle cx="21.9" cy="10.2" r="2.8" fill="#111"/><path d="M13.2 21.6Q18 18.4 22.6 16.6L24 17.2L19.8 32.6Q22 32 24.9 31.2L24.5 32.4Q20 35 16.2 36.6Q14.8 36.8 15 35.2L19 21Q16.6 21.6 13.6 22.4Z" fill="#111"/></svg>
<div class="t" style="left:1243.05px;top:543.78px;font-size:26.60px;font-weight:400;font-family:'Liberation Sans';transform:scaleX(0.9388);"><span style="color:#1E1E1E">Details</span></div>
<svg style="left:1190.00px;top:620.00px;" width="40" height="40" viewBox="0 0 40 40"><path d="M28.15 13.75L23.05 8.65L10.05 21.65L15.15 26.75Z" fill="#C4C4C4"/><path d="M10.05 21.65L15.15 26.75L6.1 30.3Z" fill="#F2F2F2" stroke="#C4C4C4" stroke-width="1.1" stroke-linejoin="round"/><path d="M29.28 12.62L24.18 7.52L25.88 5.82A3.6 3.6 0 0 1 30.98 10.92Z" fill="#C4C4C4"/></svg>
<div class="t" style="left:1243.09px;top:623.78px;font-size:26.60px;font-weight:400;font-family:'Liberation Sans';transform:scaleX(0.9170);"><span style="color:#8E8E8E">Rename</span></div>
<svg style="left:1193.00px;top:701.00px;" width="32" height="32" viewBox="0 0 32 32"><path d="M12.4 2.4H19.6V15.5H27.5L16 29L4.5 15.5H12.4Z" fill="#777"/></svg>
<div class="t" style="left:1242.99px;top:703.08px;font-size:26.60px;font-weight:400;font-family:'Liberation Sans';transform:scaleX(0.9650);"><span style="color:#8E8E8E">Download</span></div>
<svg style="left:1197px;top:781px" width="24.7" height="28.5" viewBox="0 0 26 30"><path d="M9 2.5H17V5H9Z" fill="#777"/><rect x="1" y="4.6" width="24" height="3.6" rx="1" fill="#777"/><path d="M3 9.5H23L21.4 26.6C21.3 27.8 20.3 28.6 19.2 28.6H6.8C5.7 28.6 4.7 27.8 4.6 26.6Z" fill="#777"/></svg>
<div class="t" style="left:1243.03px;top:782.58px;font-size:26.60px;font-weight:400;font-family:'Liberation Sans';transform:scaleX(0.9494);"><span style="color:#8E8E8E">Delete</span></div>
<div style="left:1193.40px;top:522.30px;width:139.50px;height:73.10px;border:3px solid #E5412D;"></div>
<div style="left:1833.30px;top:237.80px;width:1.70px;height:1248.50px;background:#EDEDED;"></div>
<svg style="left:2396.00px;top:259.00px;" width="28" height="28" viewBox="0 0 28 28"><path d="M5 5L23 23M23 5L5 23" stroke="#555" stroke-width="3.6"/></svg>
<svg style="left:1882.60px;top:294.00px" width="108.60" height="91.00" viewBox="0 0 46.2 38.5" preserveAspectRatio="none"><path d="M7.4 0H38.8L46.2 7.3V35.5C46.2 37.2 45 38.5 43.2 38.5H3C1.3 38.5 0 37.2 0 35.5V7.3Z" fill="#5A7299"/><path d="M11.9 3.6H34.5L38.6 8H7.4Z" fill="#fff"/></svg>
<div class="t" style="left:2028.08px;top:296.70px;font-size:29.60px;font-weight:400;font-family:'Liberation Sans';transform:scaleX(0.9596);"><span style="color:#1E1E1E">RAMMap.zip</span></div>
<svg style="left:2205.90px;top:297.10px" width="38.80" height="38.80" viewBox="0 0 40 40"><path d="M17.88 22.83Q14.27 19.22 16.75 16.75L23.46 10.03A4.45 4.45 0 0 1 29.76 16.32L26.22 19.86M22.12 17.17Q25.73 20.78 23.25 23.25L16.54 29.97A4.45 4.45 0 0 1 10.24 23.68L13.78 20.14" stroke="#C9C9C9" stroke-width="3.4" fill="none" stroke-linecap="butt"/></svg>
<svg style="left:2027.00px;top:347.00px;" width="34" height="34" viewBox="0 0 34 34"><path d="M17.00 2.50L20.76 13.12L32.03 13.42L23.09 20.28L26.29 31.08L17.00 24.70L7.71 31.08L10.91 20.28L1.97 13.42L13.24 13.12Z" fill="#9C9C9C"/></svg>
<div class="t" style="left:2065.14px;top:352.21px;font-size:27.03px;font-weight:400;font-family:'Liberation Sans';transform:scaleX(0.9134);"><span style="color:#9E9E9E">671 KB, 8 months ago</span></div>
<div class="t" style="left:1907.90px;top:487.49px;font-size:25.87px;font-weight:400;font-family:'Liberation Sans';transform:scaleX(0.9460);"><span style="color:#777">Activities</span></div>
<div class="t" style="left:2078.42px;top:487.49px;font-size:25.87px;font-weight:400;font-family:'Liberation Sans';transform:scaleX(0.9735);"><span style="color:#777">Comments</span></div>
<div class="t" style="left:2281.23px;top:487.49px;font-size:25.87px;font-weight:400;font-family:'Liberation Sans';transform:scaleX(0.9492);"><span style="color:#777">Sharing</span></div>
<div style="left:1864.00px;top:529.40px;width:551.00px;height:3.70px;background:#F1F1F1;"></div>
<div class="t" style="left:1976.63px;top:548.58px;font-size:26.60px;font-weight:400;font-family:'Liberation Sans';transform:scaleX(0.8974);"><span style="color:#777">Tags</span></div>
<div class="t" style="left:2226.80px;top:549.18px;font-size:26.60px;font-weight:700;font-family:'Liberation Sans';transform:scaleX(0.9143);"><span style="color:#111">Versions</span></div>
<div style="left:1864.00px;top:592.00px;width:551.00px;height:3.00px;background:#EFEFEF;"></div>
<div style="left:2139.00px;top:591.60px;width:276.00px;height:4.40px;background:#0C1D42;"></div>
<div style="left:2142.00px;top:525.50px;width:280.20px;height:79.90px;border:3px solid #E5412D;"></div>
<div style="left:1864.50px;top:652.70px;width:551.00px;height:234.80px;background:#F7F7F7;"></div>
<div style="left:1864.50px;top:770.20px;width:551.00px;height:1.40px;background:#E6E6E6;"></div>
<svg style="left:1882.00px;top:675.00px" width="46.30" height="39.00" viewBox="0 0 46.2 38.5" preserveAspectRatio="none"><path d="M7.4 0H38.8L46.2 7.3V35.5C46.2 37.2 45 38.5 43.2 38.5H3C1.3 38.5 0 37.2 0 35.5V7.3Z" fill="#5A7299"/><path d="M11.9 3.6H34.5L38.6 8H7.4Z" fill="#fff"/></svg>
<svg style="left:1972.00px;top:669.00px;" width="32" height="32" viewBox="0 0 32 32"><path d="M12.4 2.4H19.6V15.5H27.5L16 29L4.5 15.5H12.4Z" fill="#777"/></svg>
<div class="t" style="left:2010.92px;top:668.05px;font-size:28.05px;font-weight:700;font-family:'Liberation Sans';transform:scaleX(0.8928);"><span style="color:#777">8 months ago</span></div>
<div class="t" style="left:1972.27px;top:719.98px;font-size:26.60px;font-weight:400;font-family:'Liberation Sans';transform:scaleX(0.9094);"><span style="color:#999">671 KB</span></div>
<svg style="left:1882.00px;top:792.90px" width="46.30" height="39.00" viewBox="0 0 46.2 38.5" preserveAspectRatio="none"><path d="M7.4 0H38.8L46.2 7.3V35.5C46.2 37.2 45 38.5 43.2 38.5H3C1.3 38.5 0 37.2 0 35.5V7.3Z" fill="#5A7299"/><path d="M11.9 3.6H34.5L38.6 8H7.4Z" fill="#fff"/></svg>
<svg style="left:1972.00px;top:786.90px;" width="32" height="32" viewBox="0 0 32 32"><path d="M12.4 2.4H19.6V15.5H27.5L16 29L4.5 15.5H12.4Z" fill="#777"/></svg>
<div class="t" style="left:2010.92px;top:785.95px;font-size:28.05px;font-weight:700;font-family:'Liberation Sans';transform:scaleX(0.8928);"><span style="color:#777">8 months ago</span></div>
<div class="t" style="left:1972.27px;top:837.88px;font-size:26.60px;font-weight:400;font-family:'Liberation Sans';transform:scaleX(0.9094);"><span style="color:#999">671 KB</span></div>
<div style="left:1854.70px;top:648.80px;width:565.10px;height:245.10px;border:3px solid #E5412D;"></div>
<div style="left:189.00px;top:1441.70px;width:903.70px;height:44.60px;background:#8AB4C0;border-radius:0 7px 0 7px;box-shadow:0 0 0 1px rgba(0,0,0,0.22),0 0 5px rgba(0,0,0,0.25),0 -4px 14px rgba(0,0,0,0.08);"></div>
<div class="t" style="left:198.69px;top:1450.01px;font-size:28.92px;font-weight:400;font-family:'Liberation Sans';transform:scaleX(1.0059);"><span style="color:#000">oc-longvan.net/index.php/apps/files/?dir=/DATA/Software&amp;fileid=28#</span></div>
</body></html>
